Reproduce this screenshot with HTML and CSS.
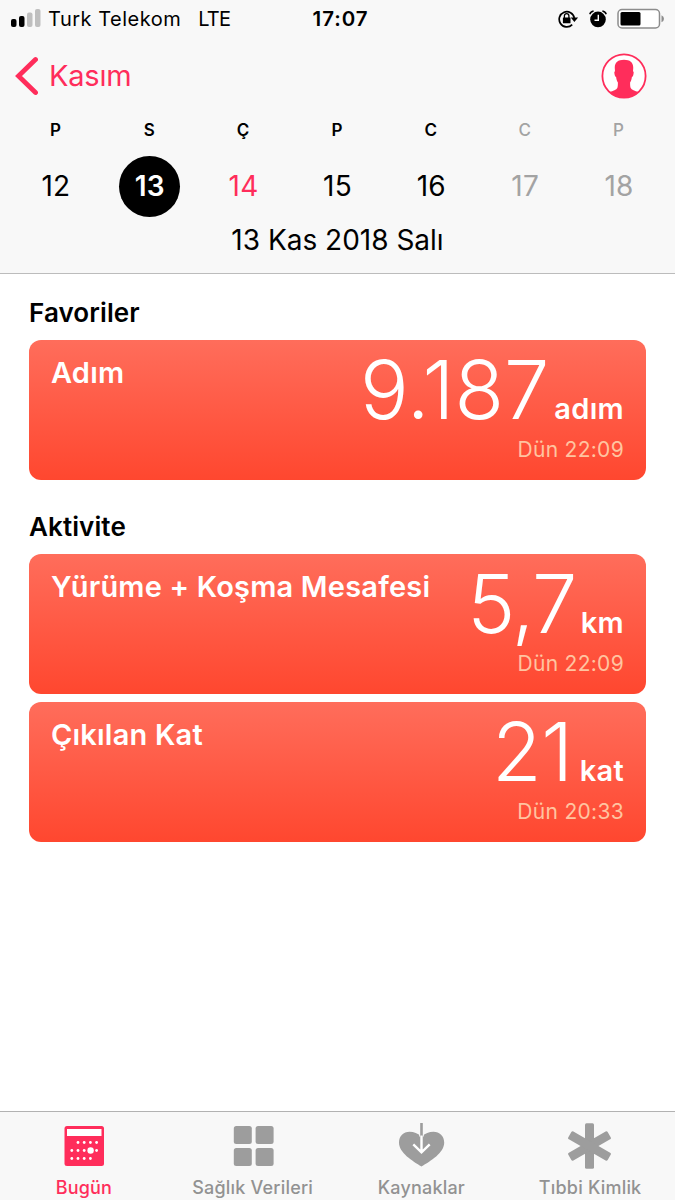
FILE: index.html
```
<!DOCTYPE html>
<html lang="tr">
<head>
    <meta charset="UTF-8">
    <title>Sağlık</title>
    <link rel="stylesheet" href="styles.css">
</head>
<body>
    <div class="app">
        <header class="header">
            <div class="status-bar">
                <div class="status-left">
                    <svg class="signal" width="30" height="19" viewBox="0 0 30 19">
                        <rect x="0" y="10" width="5.500" height="8" rx="2" fill="#000"/>
                        <rect x="8" y="7" width="5.500" height="11" rx="2" fill="#000"/>
                        <rect x="16" y="3.500" width="5.500" height="14.500" rx="2" fill="#bfbfbf"/>
                        <rect x="24" y="0" width="5.500" height="18" rx="2" fill="#bfbfbf"/>
                    </svg>
                    <span class="carrier">Turk Telekom</span>
                    <span class="network">LTE</span>
                </div>
                <div class="clock">17:07</div>
                <div class="status-right">
                    <svg width="22" height="20" viewBox="0 0 22 20">
                        <path d="M14.200 15.600A7.600 7.600 0 1 1 16.300 9" fill="none" stroke="#000" stroke-width="1.700"/>
                        <path d="M12.700 8.500h7.400l-3.700 4.500z" fill="#000"/>
                        <rect x="4.900" y="8.500" width="7.600" height="5.800" rx=".6" fill="#000"/>
                        <path d="M6.400 9V6.800a2.200 2.200 0 0 1 4.500 0V9" fill="none" stroke="#000" stroke-width="1.300"/>
                    </svg>
                    <svg class="alarm" width="18" height="18" viewBox="0 0 18 18">
                        <circle cx="9" cy="9.400" r="7.800" fill="#000"/>
                        <path d="M.8 4.200Q1.600 1.500 4.600 1M17.200 4.200Q16.400 1.500 13.400 1" fill="none" stroke="#000" stroke-width="1.500"/>
                        <path d="M9.300 4.700v5.500H5.500" fill="none" stroke="#fff" stroke-width="1.400"/>
                    </svg>
                    <svg width="48" height="22" viewBox="0 0 48 22">
                        <rect x="1" y="1.500" width="41.500" height="18.500" rx="4" fill="#fff" stroke="#8c8c8c" stroke-width="1.500"/>
                        <rect x="3.500" y="4" width="20" height="13.500" rx="1.500" fill="#000"/>
                        <path d="M44.500 7.300q2.500 1 2.500 3.500t-2.500 3.500z" fill="#8c8c8c"/>
                    </svg>
                </div>
            </div>

            <div class="nav-bar">
                <a class="back">
                    <svg width="24" height="40" viewBox="0 0 24 40">
                        <path d="M21.500 3.500L4.500 20l17 16.500" fill="none" stroke="#ff2d5b" stroke-width="4.800" stroke-linecap="round" stroke-linejoin="miter"/>
                    </svg>
                    <span>Kasım</span>
                </a>
                <svg class="avatar" width="46" height="46" viewBox="0 0 46 46">
                    <circle cx="23" cy="23" r="21.600" fill="#fff" stroke="#ff2d5b" stroke-width="1.800"/>
                    <path d="M23 6.800c6.200 0 9.600 3 9.200 8.600l-.2 2.800c.9.400.8 1.700.4 3.200-.3 1.400-.8 2.300-1.500 2.600-.3 2.500-1 4.200-1.800 5.400 0 2.700.1 4.400.6 5.600 .8 2 4 2.900 8 4A21.500 21.500 0 0 1 8.300 39c4-1.100 7.200-2 8-4 .5-1.200.6-2.900.6-5.600-.8-1.200-1.500-2.900-1.800-5.400-.7-.3-1.200-1.200-1.500-2.600-.4-1.500-.5-2.800.4-3.200l-.2-2.800C13.400 9.800 16.800 6.800 23 6.800z" fill="#ff2d5b"/>
                </svg>
            </div>

            <div class="week">
                <div class="day"><span class="day-name">P</span><span class="day-number">12</span></div>
                <div class="day selected"><span class="day-name">S</span><span class="day-number">13</span></div>
                <div class="day today"><span class="day-name">Ç</span><span class="day-number">14</span></div>
                <div class="day"><span class="day-name">P</span><span class="day-number">15</span></div>
                <div class="day"><span class="day-name">C</span><span class="day-number">16</span></div>
                <div class="day weekend"><span class="day-name">C</span><span class="day-number">17</span></div>
                <div class="day weekend"><span class="day-name">P</span><span class="day-number">18</span></div>
            </div>
            <div class="full-date">13 Kas 2018 Salı</div>
        </header>

        <main class="content">
            <section>
                <h2>Favoriler</h2>
                <div class="card">
                    <div class="card-title">Adım</div>
                    <div class="card-data">
                        <div class="card-value steps">9.187<span class="unit">adım</span></div>
                        <div class="card-time">Dün 22:09</div>
                    </div>
                </div>
            </section>
            <section>
                <h2>Aktivite</h2>
                <div class="card">
                    <div class="card-title">Yürüme + Koşma Mesafesi</div>
                    <div class="card-data">
                        <div class="card-value distance">5,7<span class="unit">km</span></div>
                        <div class="card-time">Dün 22:09</div>
                    </div>
                </div>
                <div class="card">
                    <div class="card-title">Çıkılan Kat</div>
                    <div class="card-data">
                        <div class="card-value floors">21<span class="unit">kat</span></div>
                        <div class="card-time">Dün 20:33</div>
                    </div>
                </div>
            </section>
        </main>

        <nav class="tab-bar">
            <a class="tab active">
                <svg width="46" height="46" viewBox="0 0 46 46">
                    <rect x="3.500" y="3" width="39.500" height="40" rx="2.500" fill="#ff2d5b"/>
                    <rect x="6" y="6" width="34.500" height="7" fill="#fff"/>
                    <g fill="#fff">
                        <circle cx="17" cy="19.500" r="1.400"/><circle cx="23.200" cy="19.500" r="1.400"/><circle cx="29.400" cy="19.500" r="1.400"/><circle cx="35.600" cy="19.500" r="1.400"/>
                        <circle cx="10.800" cy="27.500" r="1.400"/><circle cx="17" cy="27.500" r="1.400"/><circle cx="23.200" cy="27.500" r="1.400"/><circle cx="29.600" cy="27.500" r="3.200"/><circle cx="35.600" cy="27.500" r="1.400"/>
                        <circle cx="10.800" cy="35.500" r="1.400"/><circle cx="17" cy="35.500" r="1.400"/><circle cx="23.200" cy="35.500" r="1.400"/><circle cx="29.400" cy="35.500" r="1.400"/>
                    </g>
                </svg>
                <span>Bugün</span>
            </a>
            <a class="tab">
                <svg width="46" height="46" viewBox="0 0 46 46" fill="#9d9d9d">
                    <rect x="3.800" y="3" width="18" height="18" rx="2.500"/>
                    <rect x="25.600" y="3" width="18" height="18" rx="2.500"/>
                    <rect x="3.800" y="25" width="18" height="18" rx="2.500"/>
                    <rect x="25.600" y="25" width="18" height="18" rx="2.500"/>
                </svg>
                <span>Sağlık Verileri</span>
            </a>
            <a class="tab">
                <svg width="46" height="46" viewBox="0 0 46 46">
                    <path d="M22.500 43.500C13.700 38 0 30 0 19.500 0 13 4.500 8.800 10.500 8.800c4.500 0 8.500 1.700 11 4h2c2.500-2.300 6.500-4 11-4 6 0 10.700 4.200 10.700 10.700C45.200 30 31.500 38 22.500 43.500z" fill="#9d9d9d"/>
                    <path d="M20.700 9v4.500M24.300 9v4.500" stroke="#f8f8f8" stroke-width="1"/>
                    <path d="M22.500 0v13" stroke="#9d9d9d" stroke-width="2.600"/>
                    <path d="M22.500 12.500v16M14.300 21.300l8.200 8 8.200-8" fill="none" stroke="#fff" stroke-width="2.400"/>
                </svg>
                <span>Kaynaklar</span>
            </a>
            <a class="tab">
                <svg width="46" height="46" viewBox="0 0 46 46" fill="#9d9d9d">
                    <rect x="17" y=".3" width="9" height="45.400" rx="1.500"/>
                    <rect x="17" y=".3" width="9" height="45.400" rx="1.500" transform="rotate(60 21.500 23)"/>
                    <rect x="17" y=".3" width="9" height="45.400" rx="1.500" transform="rotate(-60 21.500 23)"/>
                </svg>
                <span>Tıbbi Kimlik</span>
            </a>
        </nav>
    </div>
</body>
</html>
```

FILE: styles.css
```
* {
    box-sizing: border-box;
}
body {
    margin: 0;
    font-family: Inter, "Liberation Sans", sans-serif;
    background-color: #fff;
    color: #000;
}
svg {
    display: block;
    flex-shrink: 0;
}
.app {
    display: flex;
    flex-direction: column;
    width: 675px;
    height: 1200px;
    overflow: hidden;
}
.header {
    height: 274px;
    background-color: #f8f8f8;
    border-bottom: 1px solid #bcbcbc;
}
.status-bar {
    display: grid;
    grid-template-columns: 1fr auto 1fr;
    align-items: center;
    height: 37px;
    padding: 0 10px 0 11px;
    font-size: 20px;
}
.status-left {
    display: flex;
    align-items: center;
}
.carrier {
    margin-left: 7px;
    letter-spacing: 0.5px;
}
.network {
    margin-left: 17px;
    letter-spacing: -0.8px;
}
.clock {
    padding-left: 5px;
    font-weight: 600;
    font-size: 20.5px;
    letter-spacing: 0.9px;
}
.status-right {
    display: flex;
    justify-content: flex-end;
    align-items: center;
}
.alarm {
    margin: 0 10px 0 9px;
}
.nav-bar {
    display: flex;
    justify-content: space-between;
    align-items: center;
    height: 78px;
    padding: 0 28px 0 14px;
}
.back {
    display: flex;
    align-items: center;
    gap: 11px;
    color: #ff2d5b;
    font-size: 29px;
    letter-spacing: -0.2px;
}
.back span {
    margin-top: -2px;
}
.avatar {
    margin-top: -1px;
}
.week {
    display: grid;
    grid-template-columns: repeat(7, 1fr);
    padding: 0 9px;
}
.day {
    display: flex;
    flex-direction: column;
    align-items: center;
}
.day-name {
    line-height: 30px;
    padding-right: 1px;
    font-size: 17px;
    font-weight: 600;
}
.day-number {
    width: 61px;
    height: 61px;
    margin-top: 11px;
    border-radius: 50%;
    line-height: 61px;
    text-align: center;
    font-size: 28px;
    letter-spacing: 0.3px;
}
.selected .day-number {
    background-color: #000;
    color: #fff;
    font-weight: 600;
}
.today .day-number {
    color: #ff2d5b;
}
.weekend {
    color: #a3a3a3;
}
.weekend .day-name {
    font-weight: 500;
}
.full-date {
    margin-top: 3px;
    line-height: 40px;
    text-align: center;
    font-size: 28px;
}
.content {
    flex: 1;
    padding: 0 29px;
}
h2 {
    margin: 0;
    padding: 12px 0 8px;
    line-height: 38px;
    font-size: 26px;
    font-weight: 600;
    letter-spacing: 0.1px;
}
section {
    padding-top: 8px;
}
section + section {
    padding-top: 16px;
}
.card {
    display: flex;
    justify-content: space-between;
    height: 140px;
    padding: 4px 22px 0 22px;
    border-radius: 12px;
    background: linear-gradient(#ff6d5b, #ff472f);
    color: #fff;
}
.card + .card {
    margin-top: 7.5px;
}
.card-title {
    padding-top: 9px;
    line-height: 40px;
    font-size: 29px;
    font-weight: 600;
    letter-spacing: 0.2px;
    white-space: nowrap;
}
.card-data {
    text-align: right;
}
.card-value {
    height: 92px;
    line-height: 92px;
    font-size: 81px;
    font-weight: 300;
    white-space: nowrap;
}
.distance {
    letter-spacing: -1.5px;
}
.floors {
    letter-spacing: -0.5px;
}
.unit {
    margin-left: 5px;
    line-height: 1;
    font-size: 29px;
    font-weight: 600;
    letter-spacing: 0.3px;
}
.floors .unit {
    margin-left: 7px;
}
.card-time {
    line-height: 28px;
    font-size: 21px;
    letter-spacing: 0.3px;
    color: #ffc4a0;
}
.tab-bar {
    display: grid;
    grid-template-columns: repeat(4, 1fr);
    height: 89px;
    background-color: #f8f8f8;
    border-top: 1px solid #b2b2b2;
}
.tab {
    display: flex;
    flex-direction: column;
    align-items: center;
    padding-top: 11px;
    color: #929292;
    font-size: 18px;
    font-weight: 500;
    letter-spacing: 0.2px;
}
.tab span {
    margin-top: 7px;
    padding-right: 1px;
    line-height: 24px;
}
.tab.active {
    color: #ff2d5b;
}
```
